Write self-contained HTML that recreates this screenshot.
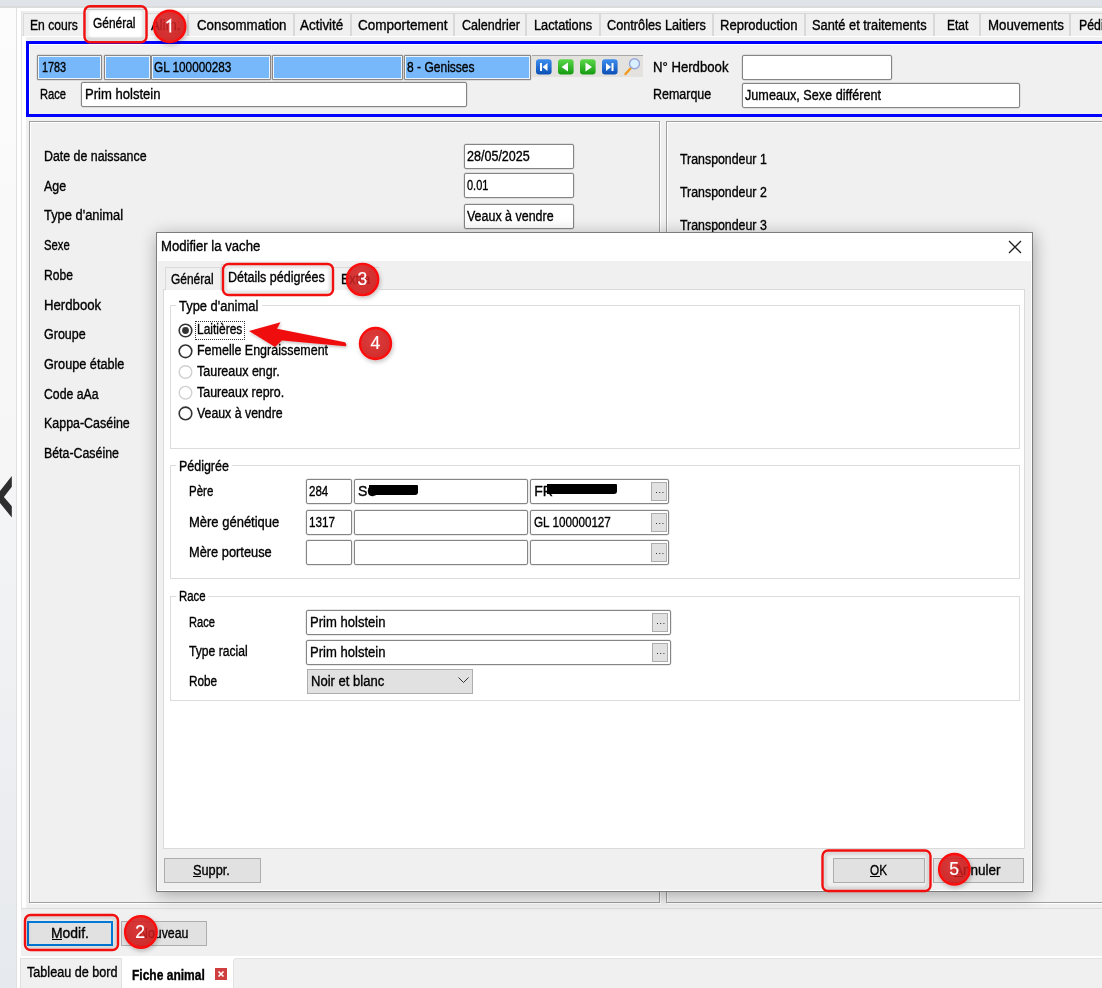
<!DOCTYPE html>
<html><head><meta charset="utf-8">
<style>
*{box-sizing:border-box;margin:0;padding:0}
html,body{width:1102px;height:988px;overflow:hidden;background:#f0f0f0;font-family:"Liberation Sans",sans-serif;font-size:14px;color:#000;position:relative}
.a{position:absolute}
.t{position:absolute;white-space:nowrap;line-height:14px;transform-origin:0 0;-webkit-text-stroke:0.35px #000;color:#000}
.inp{position:absolute;background:#fff;border:1px solid #858585;border-radius:2px;box-shadow:0 0 0 0.4px rgba(120,120,120,.35)}
.bl{background:#76b8fa;border:1px solid #8a8785;border-radius:1px;box-shadow:inset 0 0 0 1px #eaf4ff, 0 0 0 0.4px rgba(120,120,120,.35)}
.tab{position:absolute;top:13px;height:23px;border:1px solid #d9d9d9;border-bottom:none;background:#f0f0f0}
.gb{position:absolute;border:1px solid #a0a0a0;box-shadow:inset 1px 1px 0 #fff, 1px 1px 0 #fff}
.dgb{position:absolute;border:1px solid #dcdcdc}
.btn{position:absolute;background:#e1e1e1;border:1px solid #adadad}
.dots{position:absolute;background:#e1e1e1;border:1px solid #adadad}
.dots:after{content:"";position:absolute;left:3.5px;top:8.5px;width:1.6px;height:1.6px;background:#333;box-shadow:3.2px 0 0 #333,6.4px 0 0 #333}
.u{position:absolute;height:1px;background:#000}
</style></head><body>
<div class="a" style="left:0px;top:0px;width:1102px;height:8px;background:linear-gradient(#e0e3e7 0%,#e0e3e7 75%,#dadbdc 76%,#dcdcdc 100%)"></div>
<div class="a" style="left:0px;top:8px;width:16px;height:980px;background:linear-gradient(#fcfcfc 0%,#f6f6f7 45%,#e6e9ed 100%)"></div>
<div class="a" style="left:16px;top:8px;width:2px;height:980px;background:linear-gradient(90deg,#dedede,#e9e9e9)"></div>
<div class="a" style="left:17px;top:8px;width:1085px;height:3px;background:#fff"></div>
<div class="a" style="left:17px;top:8px;width:4px;height:948px;background:#fff"></div>
<div class="a" style="left:21px;top:11px;width:1081px;height:1px;background:#ececec"></div>
<div class="a" style="left:21px;top:11px;width:1px;height:900px;background:#e6e6e6"></div>
<svg class="a" style="left:0;top:474px" width="14" height="46" viewBox="0 0 14 46"><path d="M11.8 2 L11.8 12.7 L3.9 23 L11.8 32.3 L11.8 43.6 L0 29 L0 17 Z" fill="#2e2e2e"/></svg>
<div class="a" style="left:21px;top:35px;width:1081px;height:874px;background:#f0f0f0;border-top:1px solid #fff;border-left:1px solid #fff;border-bottom:1px solid #dcdcdc"></div>
<div class="a" style="left:22px;top:36px;width:4px;height:872px;background:#fff"></div>
<div class="a" style="left:21px;top:35px;width:1081px;height:1px;background:#dcdcdc"></div>
<div class="a" style="left:21px;top:36px;width:1081px;height:1px;background:#fff"></div>
<div class="a" style="left:21px;top:12px;width:1px;height:897px;background:#e3e3e3"></div>
<div class="tab" style="left:23px;width:61px"></div>
<div class="tab" style="left:147px;width:41px"></div>
<div class="tab" style="left:188px;width:106px"></div>
<div class="tab" style="left:294px;width:57px"></div>
<div class="tab" style="left:351px;width:103px"></div>
<div class="tab" style="left:454px;width:72px"></div>
<div class="tab" style="left:526px;width:74px"></div>
<div class="tab" style="left:600px;width:113px"></div>
<div class="tab" style="left:713px;width:92px"></div>
<div class="tab" style="left:805px;width:129px"></div>
<div class="tab" style="left:934px;width:46px"></div>
<div class="tab" style="left:980px;width:90px"></div>
<div class="tab" style="left:1070px;width:60px"></div>
<span class="t" style="left:30.00px;top:18.00px;transform:scaleX(0.8665);">En cours</span>
<span class="t" style="left:150.90px;top:18.00px;transform:scaleX(0.9414);">Alim.</span>
<span class="t" style="left:196.50px;top:18.00px;transform:scaleX(0.9505);">Consommation</span>
<span class="t" style="left:300.40px;top:18.00px;transform:scaleX(0.9595);">Activité</span>
<span class="t" style="left:357.80px;top:18.00px;transform:scaleX(0.9666);">Comportement</span>
<span class="t" style="left:461.70px;top:18.00px;transform:scaleX(0.8961);">Calendrier</span>
<span class="t" style="left:534.20px;top:18.00px;transform:scaleX(0.9117);">Lactations</span>
<span class="t" style="left:607.10px;top:18.00px;transform:scaleX(0.9077);">Contrôles Laitiers</span>
<span class="t" style="left:720.40px;top:18.00px;transform:scaleX(0.9304);">Reproduction</span>
<span class="t" style="left:812.30px;top:18.00px;transform:scaleX(0.9145);">Santé et traitements</span>
<span class="t" style="left:946.80px;top:18.00px;transform:scaleX(0.8543);">Etat</span>
<span class="t" style="left:987.50px;top:18.00px;transform:scaleX(0.9470);">Mouvements</span>
<span class="t" style="left:1078.60px;top:18.00px;transform:scaleX(0.8793);">Pédigrée</span>
<div class="tab" style="left:84px;top:9px;width:63px;height:28px;background:#fff"></div>
<span class="t" style="left:92.80px;top:16.00px;transform:scaleX(0.8527);">Général</span>
<div class="a" style="left:26px;top:41px;width:1090px;height:76px;border:3px solid #0000ff;border-right:none;background:#f0f0f0;box-shadow:inset 1px 1px 0 #fff"></div>
<div class="inp bl" style="left:37px;top:55px;width:65px;height:25px"></div>
<div class="inp bl" style="left:104px;top:55px;width:47px;height:25px"></div>
<div class="inp bl" style="left:151px;top:55px;width:120px;height:25px"></div>
<div class="inp bl" style="left:272px;top:55px;width:131px;height:25px"></div>
<div class="inp bl" style="left:404px;top:55px;width:127px;height:25px"></div>
<span class="t" style="left:41.60px;top:60.00px;transform:scaleX(0.7757);">1783</span>
<span class="t" style="left:153.80px;top:60.00px;transform:scaleX(0.8399);">GL 100000283</span>
<span class="t" style="left:407.20px;top:60.00px;transform:scaleX(0.8598);">8 - Genisses</span>
<div class="a" style="left:532px;top:55px;width:111px;height:22px;background:#e4e2de;border-top:1px solid #a8a8a8"></div>
<svg class="a" style="left:535px;top:58px" width="110" height="18" viewBox="535 58 110 18">
<defs><linearGradient id="gb" x1="0" y1="0" x2="0" y2="1"><stop offset="0" stop-color="#3d8ef0"/><stop offset="1" stop-color="#0a4fb5"/></linearGradient>
<linearGradient id="gg" x1="0" y1="0" x2="0" y2="1"><stop offset="0" stop-color="#5cd84a"/><stop offset="1" stop-color="#139a10"/></linearGradient></defs>
<rect x="536" y="59.2" width="15.6" height="15.4" rx="3" fill="url(#gb)"/>
<rect x="540" y="63" width="2" height="8" fill="#fff"/><path d="M542.5 67 L547.5 63 L547.5 71 Z" fill="#fff"/>
<rect x="558" y="59.2" width="15.6" height="15.4" rx="3" fill="url(#gg)"/>
<path d="M561.5 67 L568 62.5 L568 71.5 Z" fill="#fff"/>
<rect x="580" y="59.2" width="15.6" height="15.4" rx="3" fill="url(#gg)"/>
<path d="M592 67 L585.5 62.5 L585.5 71.5 Z" fill="#fff"/>
<rect x="602" y="59.2" width="15.6" height="15.4" rx="3" fill="url(#gb)"/>
<path d="M611 67 L606 63 L606 71 Z" fill="#fff"/><rect x="611.5" y="63" width="2" height="8" fill="#fff"/>
<line x1="625.5" y1="74" x2="630.5" y2="68.5" stroke="#f09a20" stroke-width="2.4" stroke-linecap="round"/>
<circle cx="634.5" cy="63.8" r="5" fill="#d8f0ff" stroke="#9aa6d8" stroke-width="1.4"/>
</svg>
<span class="t" style="left:653.30px;top:60.00px;transform:scaleX(0.9397);">N° Herdbook</span>
<div class="inp" style="left:742px;top:55px;width:150px;height:25px"></div>
<span class="t" style="left:40.20px;top:87.00px;transform:scaleX(0.7974);">Race</span>
<div class="inp" style="left:81px;top:82px;width:386px;height:25px"></div>
<span class="t" style="left:85.10px;top:87.00px;transform:scaleX(0.9329);">Prim holstein</span>
<span class="t" style="left:653.30px;top:87.00px;transform:scaleX(0.8900);">Remarque</span>
<div class="inp" style="left:742px;top:83px;width:278px;height:25px"></div>
<span class="t" style="left:745.30px;top:88.00px;transform:scaleX(0.9029);">Jumeaux, Sexe différent</span>
<div class="gb" style="left:29px;top:121px;width:631px;height:782px"></div>
<div class="gb" style="left:666px;top:121px;width:450px;height:782px"></div>
<span class="t" style="left:43.80px;top:149.00px;transform:scaleX(0.8846);">Date de naissance</span>
<span class="t" style="left:43.80px;top:179.00px;transform:scaleX(0.8863);">Age</span>
<span class="t" style="left:43.80px;top:208.00px;transform:scaleX(0.9202);">Type d'animal</span>
<span class="t" style="left:43.80px;top:238.00px;transform:scaleX(0.8042);">Sexe</span>
<span class="t" style="left:43.80px;top:268.00px;transform:scaleX(0.8626);">Robe</span>
<span class="t" style="left:43.80px;top:298.00px;transform:scaleX(0.9417);">Herdbook</span>
<span class="t" style="left:43.80px;top:327.00px;transform:scaleX(0.8925);">Groupe</span>
<span class="t" style="left:43.80px;top:357.00px;transform:scaleX(0.9059);">Groupe étable</span>
<span class="t" style="left:43.80px;top:387.00px;transform:scaleX(0.8764);">Code aAa</span>
<span class="t" style="left:43.80px;top:416.00px;transform:scaleX(0.8888);">Kappa-Caséine</span>
<span class="t" style="left:43.80px;top:446.00px;transform:scaleX(0.8827);">Béta-Caséine</span>
<div class="inp" style="left:464px;top:144px;width:110px;height:25px"></div>
<div class="inp" style="left:464px;top:173px;width:110px;height:25px"></div>
<div class="inp" style="left:464px;top:204px;width:110px;height:25px"></div>
<span class="t" style="left:466.80px;top:149.00px;transform:scaleX(0.8959);">28/05/2025</span>
<span class="t" style="left:466.80px;top:178.00px;transform:scaleX(0.7837);">0.01</span>
<span class="t" style="left:466.70px;top:209.00px;transform:scaleX(0.8898);">Veaux à vendre</span>
<span class="t" style="left:680.20px;top:152.00px;transform:scaleX(0.8826);">Transpondeur 1</span>
<span class="t" style="left:680.20px;top:185.00px;transform:scaleX(0.8826);">Transpondeur 2</span>
<span class="t" style="left:680.20px;top:218.00px;transform:scaleX(0.8826);">Transpondeur 3</span>
<div class="a" style="left:27px;top:921px;width:86px;height:25px;background:#e1e1e1;border:2px solid #0078d7"></div>
<span class="t" style="left:50.90px;top:925.50px;transform:scaleX(0.9942);">Modif.</span>
<div class="a" style="left:51.5px;top:938.5px;width:10px;height:1px;background:#000"></div>
<div class="a" style="left:121px;top:921px;width:86px;height:25px;background:#e1e1e1;border:1px solid #adadad"></div>
<span class="t" style="left:138.50px;top:925.50px;transform:scaleX(0.8829);">Nouveau</span>
<div class="a" style="left:17px;top:956px;width:1085px;height:32px;background:#fff"></div>
<div class="a" style="left:20px;top:958px;width:102px;height:30px;background:#f0f0f0;border:1px solid #e0e0e0;border-bottom:none"></div>
<span class="t" style="left:26.50px;top:965.00px;transform:scaleX(0.9011);">Tableau de bord</span>
<span class="t" style="left:131.90px;top:967.50px;font-weight:bold;transform:scaleX(0.8581);">Fiche animal</span>
<svg class="a" style="left:215px;top:968px" width="12" height="12" viewBox="0 0 12 12"><rect width="12" height="12" fill="#cf3f3f"/><path d="M3.5 3.5L8.5 8.5M8.5 3.5L3.5 8.5" stroke="#fff" stroke-width="1.6"/></svg>
<div class="a" style="left:233px;top:958px;width:880px;height:32px;background:#f0f0f0;border:1px solid #e3e3e3;border-radius:3px"></div>
<div class="a" style="left:156px;top:232px;width:877px;height:660px;border:1px solid #7c7c7c;background:#f0f0f0;box-shadow:1px 3px 16px rgba(0,0,0,.32), inset 1px 1px 0 #fff, inset -1px -1px 0 #fff"></div>
<div class="a" style="left:157px;top:233px;width:875px;height:28px;background:#fff"></div>
<span class="t" style="left:161.30px;top:239.00px;transform:scaleX(0.9382);">Modifier la vache</span>
<svg class="a" style="left:1008px;top:240px" width="14" height="14" viewBox="0 0 14 14"><path d="M1 1L13 13M13 1L1 13" stroke="#222" stroke-width="1.3"/></svg>
<div class="a" style="left:163px;top:289px;width:862px;height:560px;background:#fff;border:1px solid #dadada"></div>
<div class="tab" style="left:165px;top:267px;width:56px;height:23px;border-color:#dadada"></div>
<div class="tab" style="left:333px;top:267px;width:47px;height:23px;border-color:#dadada;border-right-color:#f0f0f0"></div>
<div class="tab" style="left:221px;top:264px;width:112px;height:27px;background:#fff;border-color:#dadada"></div>
<span class="t" style="left:170.90px;top:272.00px;transform:scaleX(0.8547);">Général</span>
<span class="t" style="left:341.00px;top:272.00px;transform:scaleX(0.8959);">Extra</span>
<span class="t" style="left:228.20px;top:270.00px;transform:scaleX(0.8947);">Détails pédigrées</span>
<div class="dgb" style="left:170px;top:305px;width:850px;height:144px"></div>
<div class="a" style="left:176px;top:298px;width:86px;height:14px;background:#fff"></div>
<span class="t" style="left:178.60px;top:299.00px;transform:scaleX(0.9226);">Type d'animal</span>
<svg class="a" style="left:170px;top:320px" width="30" height="102" viewBox="170 320 30 102">
<circle cx="185.5" cy="330.5" r="6.3" fill="#fff" stroke="#333" stroke-width="1.6"/><circle cx="185.5" cy="330.5" r="3.4" fill="#333"/>
<circle cx="185.5" cy="351.3" r="6.3" fill="#fff" stroke="#333" stroke-width="1.6"/>
<circle cx="185.5" cy="372" r="6.3" fill="#fff" stroke="#d0d0d0" stroke-width="1.4"/>
<circle cx="185.5" cy="392.7" r="6.3" fill="#fff" stroke="#d0d0d0" stroke-width="1.4"/>
<circle cx="185.5" cy="413.4" r="6.3" fill="#fff" stroke="#333" stroke-width="1.6"/>
</svg>
<div class="a" style="left:195px;top:320.5px;width:50px;height:19px;border:1px dotted #333"></div>
<span class="t" style="left:196.80px;top:322.00px;transform:scaleX(0.8574);">Laitières</span>
<span class="t" style="left:196.80px;top:343.00px;transform:scaleX(0.8913);">Femelle Engraissement</span>
<span class="t" style="left:196.80px;top:364.00px;transform:scaleX(0.8927);">Taureaux engr.</span>
<span class="t" style="left:196.80px;top:384.50px;transform:scaleX(0.8881);">Taureaux repro.</span>
<span class="t" style="left:196.80px;top:405.50px;transform:scaleX(0.8805);">Veaux à vendre</span>
<div class="dgb" style="left:170px;top:465px;width:850px;height:114px"></div>
<div class="a" style="left:176px;top:458px;width:56px;height:14px;background:#fff"></div>
<span class="t" style="left:178.60px;top:458.50px;transform:scaleX(0.8900);">Pédigrée</span>
<span class="t" style="left:188.60px;top:484.00px;transform:scaleX(0.8206);">Père</span>
<span class="t" style="left:188.60px;top:514.50px;transform:scaleX(0.9280);">Mère génétique</span>
<span class="t" style="left:188.60px;top:545.00px;transform:scaleX(0.9160);">Mère porteuse</span>
<div class="inp" style="left:306px;top:479px;width:46px;height:25px"></div>
<div class="inp" style="left:354px;top:479px;width:174px;height:25px"></div>
<div class="inp" style="left:530px;top:479px;width:139px;height:25px"><div class="dots" style="left:120px;top:2px;width:16px;height:19px"></div></div>
<div class="inp" style="left:306px;top:510px;width:46px;height:25px"></div>
<div class="inp" style="left:354px;top:510px;width:174px;height:25px"></div>
<div class="inp" style="left:530px;top:510px;width:139px;height:25px"><div class="dots" style="left:120px;top:2px;width:16px;height:19px"></div></div>
<div class="inp" style="left:306px;top:540px;width:46px;height:25px"></div>
<div class="inp" style="left:354px;top:540px;width:174px;height:25px"></div>
<div class="inp" style="left:530px;top:540px;width:139px;height:25px"><div class="dots" style="left:120px;top:2px;width:16px;height:19px"></div></div>
<span class="t" style="left:309.00px;top:484.00px;transform:scaleX(0.8247);">284</span>
<span class="t" style="left:309.00px;top:514.50px;transform:scaleX(0.8371);">1317</span>
<span class="t" style="left:358.00px;top:484.00px;">SC</span>
<div class="a" style="left:369px;top:484.5px;width:49px;height:10px;background:#000;border-radius:0 1px 3px 0"></div>
<span class="t" style="left:534.20px;top:484.00px;">FR</span>
<div class="a" style="left:546.5px;top:484px;width:70px;height:10px;background:#000;border-radius:0 1px 3px 0"></div>
<span class="t" style="left:534.20px;top:514.50px;transform:scaleX(0.8344);">GL 100000127</span>
<div class="dgb" style="left:170px;top:596px;width:850px;height:105px"></div>
<div class="a" style="left:176px;top:589px;width:32px;height:14px;background:#fff"></div>
<span class="t" style="left:178.90px;top:589.00px;transform:scaleX(0.8159);">Race</span>
<span class="t" style="left:189.00px;top:615.00px;transform:scaleX(0.7943);">Race</span>
<span class="t" style="left:189.00px;top:644.00px;transform:scaleX(0.8667);">Type racial</span>
<span class="t" style="left:189.00px;top:674.00px;transform:scaleX(0.8416);">Robe</span>
<div class="inp" style="left:306px;top:610px;width:365px;height:25px"><div class="dots" style="left:345px;top:2px;width:16px;height:19px"></div></div>
<div class="inp" style="left:306px;top:640px;width:365px;height:25px"><div class="dots" style="left:345px;top:2px;width:16px;height:19px"></div></div>
<span class="t" style="left:309.90px;top:615.00px;transform:scaleX(0.9329);">Prim holstein</span>
<span class="t" style="left:309.90px;top:645.00px;transform:scaleX(0.9329);">Prim holstein</span>
<div class="a" style="left:307px;top:669px;width:166px;height:25px;background:#e1e1e1;border:1px solid #adadad"></div>
<span class="t" style="left:310.70px;top:674.00px;transform:scaleX(0.9325);">Noir et blanc</span>
<svg class="a" style="left:458px;top:677px" width="11" height="7" viewBox="0 0 11 7"><path d="M0.5 0.5L5.5 5.5L10.5 0.5" stroke="#333" fill="none"/></svg>
<div class="a" style="left:164px;top:858px;width:97px;height:25px;background:#e1e1e1;border:1px solid #adadad"></div>
<span class="t" style="left:192.60px;top:863.00px;transform:scaleX(0.9111);">Suppr.</span>
<div class="a" style="left:192.6px;top:876px;width:8px;height:1px;background:#000"></div>
<div class="a" style="left:833px;top:858px;width:92px;height:25px;background:#e1e1e1;border:1px solid #adadad"></div>
<span class="t" style="left:870.10px;top:863.00px;transform:scaleX(0.8387);">OK</span>
<div class="a" style="left:870px;top:876px;width:10px;height:1px;background:#000"></div>
<div class="a" style="left:933px;top:858px;width:91px;height:25px;background:#e1e1e1;border:1px solid #adadad"></div>
<span class="t" style="left:953.50px;top:863.00px;transform:scaleX(0.9657);">Annuler</span>
<div class="a" style="left:953.5px;top:876px;width:9px;height:1px;background:#000"></div>
<svg class="a" style="left:0;top:0" width="1102" height="988" viewBox="0 0 1102 988">
<defs>
<radialGradient id="rg" cx="0.42" cy="0.35" r="0.7"><stop offset="0" stop-color="#ec4848"/><stop offset="1" stop-color="#dc2626"/></radialGradient>
<filter id="sh" x="-30%" y="-30%" width="160%" height="160%"><feDropShadow dx="1" dy="2" stdDeviation="2" flood-color="#000" flood-opacity="0.25"/></filter>
<filter id="sh2" x="-10%" y="-30%" width="120%" height="160%"><feDropShadow dx="1" dy="1.5" stdDeviation="1.5" flood-color="#000" flood-opacity="0.25"/></filter>
<filter id="bl" x="-10%" y="-20%" width="120%" height="140%"><feGaussianBlur stdDeviation="1.6"/></filter>
</defs>
<rect x="86.9" y="8.6" width="57.2" height="31.2" rx="4" fill="none" stroke="#000" stroke-opacity="0.16" stroke-width="2.5" filter="url(#bl)"/>
<rect x="225.4" y="266.4" width="105.2" height="26.2" rx="4" fill="none" stroke="#000" stroke-opacity="0.16" stroke-width="2.5" filter="url(#bl)"/>
<rect x="27.4" y="917.4" width="88.2" height="30.2" rx="4" fill="none" stroke="#000" stroke-opacity="0.16" stroke-width="2.5" filter="url(#bl)"/>
<rect x="824.9" y="852.9" width="103.2" height="35.7" rx="4" fill="none" stroke="#000" stroke-opacity="0.16" stroke-width="2.5" filter="url(#bl)"/>
<rect x="84.5" y="6.2" width="62.0" height="36.0" rx="5.5" fill="none" stroke="#f20f0f" stroke-width="2.4"/>
<rect x="223.0" y="264.0" width="110.0" height="31.0" rx="5.5" fill="none" stroke="#f20f0f" stroke-width="2.4"/>
<rect x="25.0" y="915.0" width="93.0" height="35.0" rx="5.5" fill="none" stroke="#f20f0f" stroke-width="2.4"/>
<rect x="822.5" y="850.5" width="108.0" height="40.5" rx="5.5" fill="none" stroke="#f20f0f" stroke-width="2.4"/>
<path filter="url(#sh2)" d="M249 331 L280.5 322.3 L277 328.8 L345 342.2 Q347.5 344.6 345.5 346.3 L282 340.5 L275 347 Z" fill="#f00c0c"/>
<g filter="url(#sh)"><circle cx="169.7" cy="26.4" r="15.5" fill="url(#rg)" fill-opacity="0.8" stroke="#fb1010" stroke-width="2.6"/></g><circle cx="169.7" cy="26.4" r="14.2" fill="#e02020" style="mix-blend-mode:multiply" fill-opacity="0.45"/><path d="M166.5 23.0 L170.3 20.2 L170.3 32.6" stroke="#fff" stroke-width="1.9" fill="none"/>
<g filter="url(#sh)"><circle cx="362.6" cy="279.5" r="15.5" fill="url(#rg)" fill-opacity="0.8" stroke="#fb1010" stroke-width="2.6"/></g><circle cx="362.6" cy="279.5" r="14.2" fill="#e02020" style="mix-blend-mode:multiply" fill-opacity="0.45"/><text x="362.4" y="284.8" text-anchor="middle" font-family="Liberation Sans" font-size="17.5" fill="#fff" stroke="#fff" stroke-width="0.2">3</text>
<g filter="url(#sh)"><circle cx="375.5" cy="343.5" r="15.4" fill="url(#rg)" fill-opacity="0.8" stroke="#fb1010" stroke-width="2.6"/></g><circle cx="375.5" cy="343.5" r="14.1" fill="#e02020" style="mix-blend-mode:multiply" fill-opacity="0.45"/><text x="375.3" y="348.8" text-anchor="middle" font-family="Liberation Sans" font-size="17.5" fill="#fff" stroke="#fff" stroke-width="0.2">4</text>
<g filter="url(#sh)"><circle cx="140.9" cy="931.9" r="15.7" fill="url(#rg)" fill-opacity="0.8" stroke="#fb1010" stroke-width="2.6"/></g><circle cx="140.9" cy="931.9" r="14.4" fill="#e02020" style="mix-blend-mode:multiply" fill-opacity="0.45"/><text x="140.2" y="937.9" text-anchor="middle" font-family="Liberation Sans" font-size="17.5" fill="#fff" stroke="#fff" stroke-width="0.2">2</text>
<g filter="url(#sh)"><circle cx="954.4" cy="869.3" r="15.2" fill="url(#rg)" fill-opacity="0.8" stroke="#fb1010" stroke-width="2.6"/></g><circle cx="954.4" cy="869.3" r="13.9" fill="#e02020" style="mix-blend-mode:multiply" fill-opacity="0.45"/><text x="954.2" y="874.6" text-anchor="middle" font-family="Liberation Sans" font-size="17.5" fill="#fff" stroke="#fff" stroke-width="0.2">5</text>
</svg>
</body></html>
